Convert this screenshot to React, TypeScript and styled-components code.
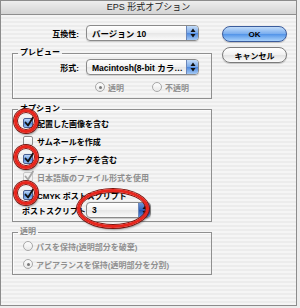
import React from "react";
import styled, { createGlobalStyle } from "styled-components";

const GlobalStyle = createGlobalStyle`
  * { box-sizing: border-box; }
  html, body { margin: 0; padding: 0; background: #ededed; }
  body {
    width: 300px;
    height: 308px;
    overflow: hidden;
    font-family: "Liberation Sans", "Noto Sans CJK JP", sans-serif;
    color: #000;
  }
`;

const Window = styled.div`
  width: 297px;
  height: 306px;
  border: 1px solid #8c8c8c;
  background: repeating-linear-gradient(to bottom, #ececec 0 2px, #f5f5f5 2px 4px);
  display: flex;
  flex-direction: column;
`;

const TitleBar = styled.div`
  height: 14px;
  flex: none;
  border-bottom: 1px solid #8e8e8e;
  background: linear-gradient(#eeeeee, #d4d4d4);
  text-align: center;
  font-size: 9px;
  line-height: 13px;
  color: #1c1c1c;
`;

const Body = styled.div`
  display: grid;
  grid-template-columns: 200px 65px;
  column-gap: 10px;
  align-items: start;
  padding: 10px 0 0 11px;
`;

const LeftCol = styled.div`
  display: flex;
  flex-direction: column;
`;

const RightCol = styled.div`
  display: flex;
  flex-direction: column;
  gap: 5px;
  padding-top: 1px;
`;

const FormRow = styled.div<{ $pad?: number; $gap?: number; $mt?: number }>`
  display: flex;
  align-items: center;
  height: 16px;
  gap: ${(p) => p.$gap ?? 7}px;
  padding-left: ${(p) => p.$pad ?? 0}px;
  margin-top: ${(p) => p.$mt ?? 0}px;
`;

const Label = styled.span<{ $w: number; $align?: string }>`
  width: ${(p) => p.$w}px;
  flex: none;
  text-align: ${(p) => p.$align ?? "right"};
  font-size: 8px;
  font-weight: 700;
  white-space: nowrap;
`;

const SelectWrap = styled.div`
  position: relative;
  flex: none;
`;

const SelectBox = styled.div<{ $w: number }>`
  width: ${(p) => p.$w}px;
  height: 16px;
  border: 1px solid #8a8a8a;
  border-radius: 4px;
  background: linear-gradient(#ffffff, #f1f1f1 50%, #e6e6e6 51%, #fafafa);
  display: flex;
  align-items: center;
  overflow: hidden;
  box-shadow: 0 1px 1px rgba(0, 0, 0, 0.15);
`;

const SelectText = styled.span`
  flex: 1;
  padding-left: 5px;
  font-size: 8.5px;
  font-weight: 700;
  white-space: nowrap;
  overflow: hidden;
`;

const ArrowPart = styled.div<{ $dark?: boolean }>`
  width: 12px;
  height: 100%;
  flex: none;
  border-left: 1px solid #6b86b8;
  background: ${(p) =>
    p.$dark
      ? "linear-gradient(#6f95d6, #2f63bb 50%, #1f50a8 51%, #5f8fdc)"
      : "linear-gradient(#c4dcf8, #79a9ea 50%, #4d88de 51%, #a3c8f4)"};
  display: flex;
  align-items: center;
  justify-content: center;
`;

const Group = styled.fieldset<{ $mt: number; $pb: number }>`
  margin: ${(p) => p.$mt}px 0 0 0;
  padding: 0 0 ${(p) => p.$pb}px 0;
  border: 1px solid #8f8f8f;
  box-shadow: inset 1px 1px 0 rgba(255, 255, 255, 0.8);
  min-inline-size: 0;
  width: 200px;
`;

const Legend = styled.legend<{ $dim?: boolean }>`
  margin-left: 5px;
  padding: 0 2px;
  font-size: 8px;
  line-height: 10px;
  font-weight: 700;
  color: ${(p) => (p.$dim ? "#8a8a8a" : "#000")};
`;

const RadioRow = styled.div<{ $pad: number; $h: number; $gap?: number; $mt?: number }>`
  display: flex;
  align-items: center;
  height: ${(p) => p.$h}px;
  padding-left: ${(p) => p.$pad}px;
  gap: ${(p) => p.$gap ?? 0}px;
  margin-top: ${(p) => p.$mt ?? 0}px;
`;

const RadioItem = styled.div`
  display: flex;
  align-items: center;
  gap: 3px;
  font-size: 8px;
  font-weight: 700;
  color: #909090;
  white-space: nowrap;
`;

const RadioCircle = styled.span<{ $on?: boolean }>`
  width: 10px;
  height: 10px;
  flex: none;
  border-radius: 50%;
  border: 1px solid #a8a8a8;
  background: linear-gradient(#fdfdfd, #e9e9e9);
  display: flex;
  align-items: center;
  justify-content: center;
  &::after {
    content: "";
    width: 3px;
    height: 3px;
    border-radius: 50%;
    background: ${(p) => (p.$on ? "#7a7a7a" : "transparent")};
  }
`;

const CheckRow = styled.div<{ $dim?: boolean }>`
  display: flex;
  align-items: center;
  height: 18px;
  padding-left: 10px;
  gap: 4px;
  font-size: 8px;
  font-weight: 700;
  color: ${(p) => (p.$dim ? "#8e8e8e" : "#000")};
  white-space: nowrap;
`;

const BoxWrap = styled.span`
  position: relative;
  width: 10px;
  height: 10px;
  flex: none;
`;

const Box = styled.span<{ $on?: boolean; $dim?: boolean }>`
  display: block;
  width: 10px;
  height: 10px;
  border-radius: 2px;
  border: 1px solid ${(p) => (p.$dim ? "#c9c9c9" : p.$on ? "#4a5f93" : "#8b8b8b")};
  background: ${(p) =>
    p.$dim
      ? "#f2f2f2"
      : p.$on
      ? "linear-gradient(#bcd6f7, #6fa2e8 50%, #4a85dc 51%, #9cc3f2)"
      : "linear-gradient(#ffffff, #e8e8e8)"};
`;

const Tick = styled.svg`
  position: absolute;
  left: 0;
  top: -2px;
  width: 12px;
  height: 12px;
  overflow: visible;
`;

const Ring = styled.span<{ $l: number; $t: number; $w: number; $h: number }>`
  position: absolute;
  left: ${(p) => p.$l}px;
  top: ${(p) => p.$t}px;
  width: ${(p) => p.$w}px;
  height: ${(p) => p.$h}px;
  border-radius: 50%;
  border: 3px solid #e8261d;
  box-shadow: 0 0 0 1px #7a140e, inset 0 0 0 1px #7a140e, 1px 2px 2px rgba(0, 0, 0, 0.35);
  pointer-events: none;
  z-index: 2;
`;

const Button = styled.div<{ $default?: boolean }>`
  height: 16px;
  border-radius: 8px;
  border: 1px solid ${(p) => (p.$default ? "#3b5c9c" : "#7b7b7b")};
  background: ${(p) =>
    p.$default
      ? "linear-gradient(#c2dcf9, #78acee 50%, #5193e8 51%, #a9d2fb)"
      : "linear-gradient(#ffffff, #f0f0f0 50%, #e2e2e2 51%, #fbfbfb)"};
  box-shadow: 0 1px 1px rgba(0, 0, 0, 0.2);
  display: flex;
  align-items: center;
  justify-content: center;
  font-size: 8px;
  font-weight: 700;
  color: #000;
`;

function Arrows() {
  return (
    <svg width="6" height="10" viewBox="0 0 6 10">
      <path d="M3 0.5 L5.5 4 L0.5 4 Z" fill="#111" />
      <path d="M3 9.5 L5.5 6 L0.5 6 Z" fill="#111" />
    </svg>
  );
}

function Select({ w, text, dark, ring }: { w: number; text: string; dark?: boolean; ring?: boolean }) {
  return (
    <SelectWrap>
      <SelectBox $w={w}>
        <SelectText>{text}</SelectText>
        <ArrowPart $dark={dark}>
          <Arrows />
        </ArrowPart>
      </SelectBox>
      {ring && <Ring $l={-9} $t={-13} $w={72} $h={39} />}
    </SelectWrap>
  );
}

function Check({ label, on, dim, ring }: { label: string; on?: boolean; dim?: boolean; ring?: boolean }) {
  return (
    <CheckRow $dim={dim}>
      <BoxWrap>
        <Box $on={on} $dim={dim} />
        {on && (
          <Tick viewBox="0 0 12 12">
            <path
              d="M2.5 6.5 L5 9.5 L10 1.5"
              fill="none"
              stroke={dim ? "#a5a5a5" : "#111"}
              strokeWidth="1.8"
              strokeLinecap="round"
              strokeLinejoin="round"
            />
          </Tick>
        )}
        {ring && <Ring $l={-9} $t={-9} $w={24} $h={24} />}
      </BoxWrap>
      <span>{label}</span>
    </CheckRow>
  );
}

export default function App() {
  return (
    <>
      <GlobalStyle />
      <Window>
        <TitleBar>EPS 形式オプション</TitleBar>
        <Body>
          <LeftCol>
            <FormRow>
              <Label $w={67}>互換性:</Label>
              <Select w={113} text="バージョン 10" />
            </FormRow>

            <Group $mt={7} $pb={6}>
              <Legend>プレビュー</Legend>
              <FormRow $mt={1}>
                <Label $w={66}>形式:</Label>
                <Select w={113} text="Macintosh(8-bit カラ…" />
              </FormRow>
              <RadioRow $pad={82} $h={10} $gap={28} $mt={7}>
                <RadioItem>
                  <RadioCircle $on />
                  透明
                </RadioItem>
                <RadioItem>
                  <RadioCircle />
                  不透明
                </RadioItem>
              </RadioRow>
            </Group>

            <Group $mt={5} $pb={3}>
              <Legend>オプション</Legend>
              <Check label="配置した画像を含む" on ring />
              <Check label="サムネールを作成" />
              <Check label="フォントデータを含む" on ring />
              <Check label="日本語版のファイル形式を使用" on dim />
              <Check label="CMYK ポストスクリプト" on ring />
              <FormRow $pad={9} $gap={0} $mt={-2}>
                <Label $w={64} $align="left">ポストスクリプト</Label>
                <Select w={65} text="3" dark ring />
              </FormRow>
            </Group>

            <Group $mt={5} $pb={1}>
              <Legend $dim>透明</Legend>
              <RadioRow $pad={10} $h={18}>
                <RadioItem>
                  <RadioCircle />
                  パスを保持(透明部分を破棄)
                </RadioItem>
              </RadioRow>
              <RadioRow $pad={10} $h={18}>
                <RadioItem>
                  <RadioCircle $on />
                  アピアランスを保持(透明部分を分割)
                </RadioItem>
              </RadioRow>
            </Group>
          </LeftCol>

          <RightCol>
            <Button $default>OK</Button>
            <Button>キャンセル</Button>
          </RightCol>
        </Body>
      </Window>
    </>
  );
}
